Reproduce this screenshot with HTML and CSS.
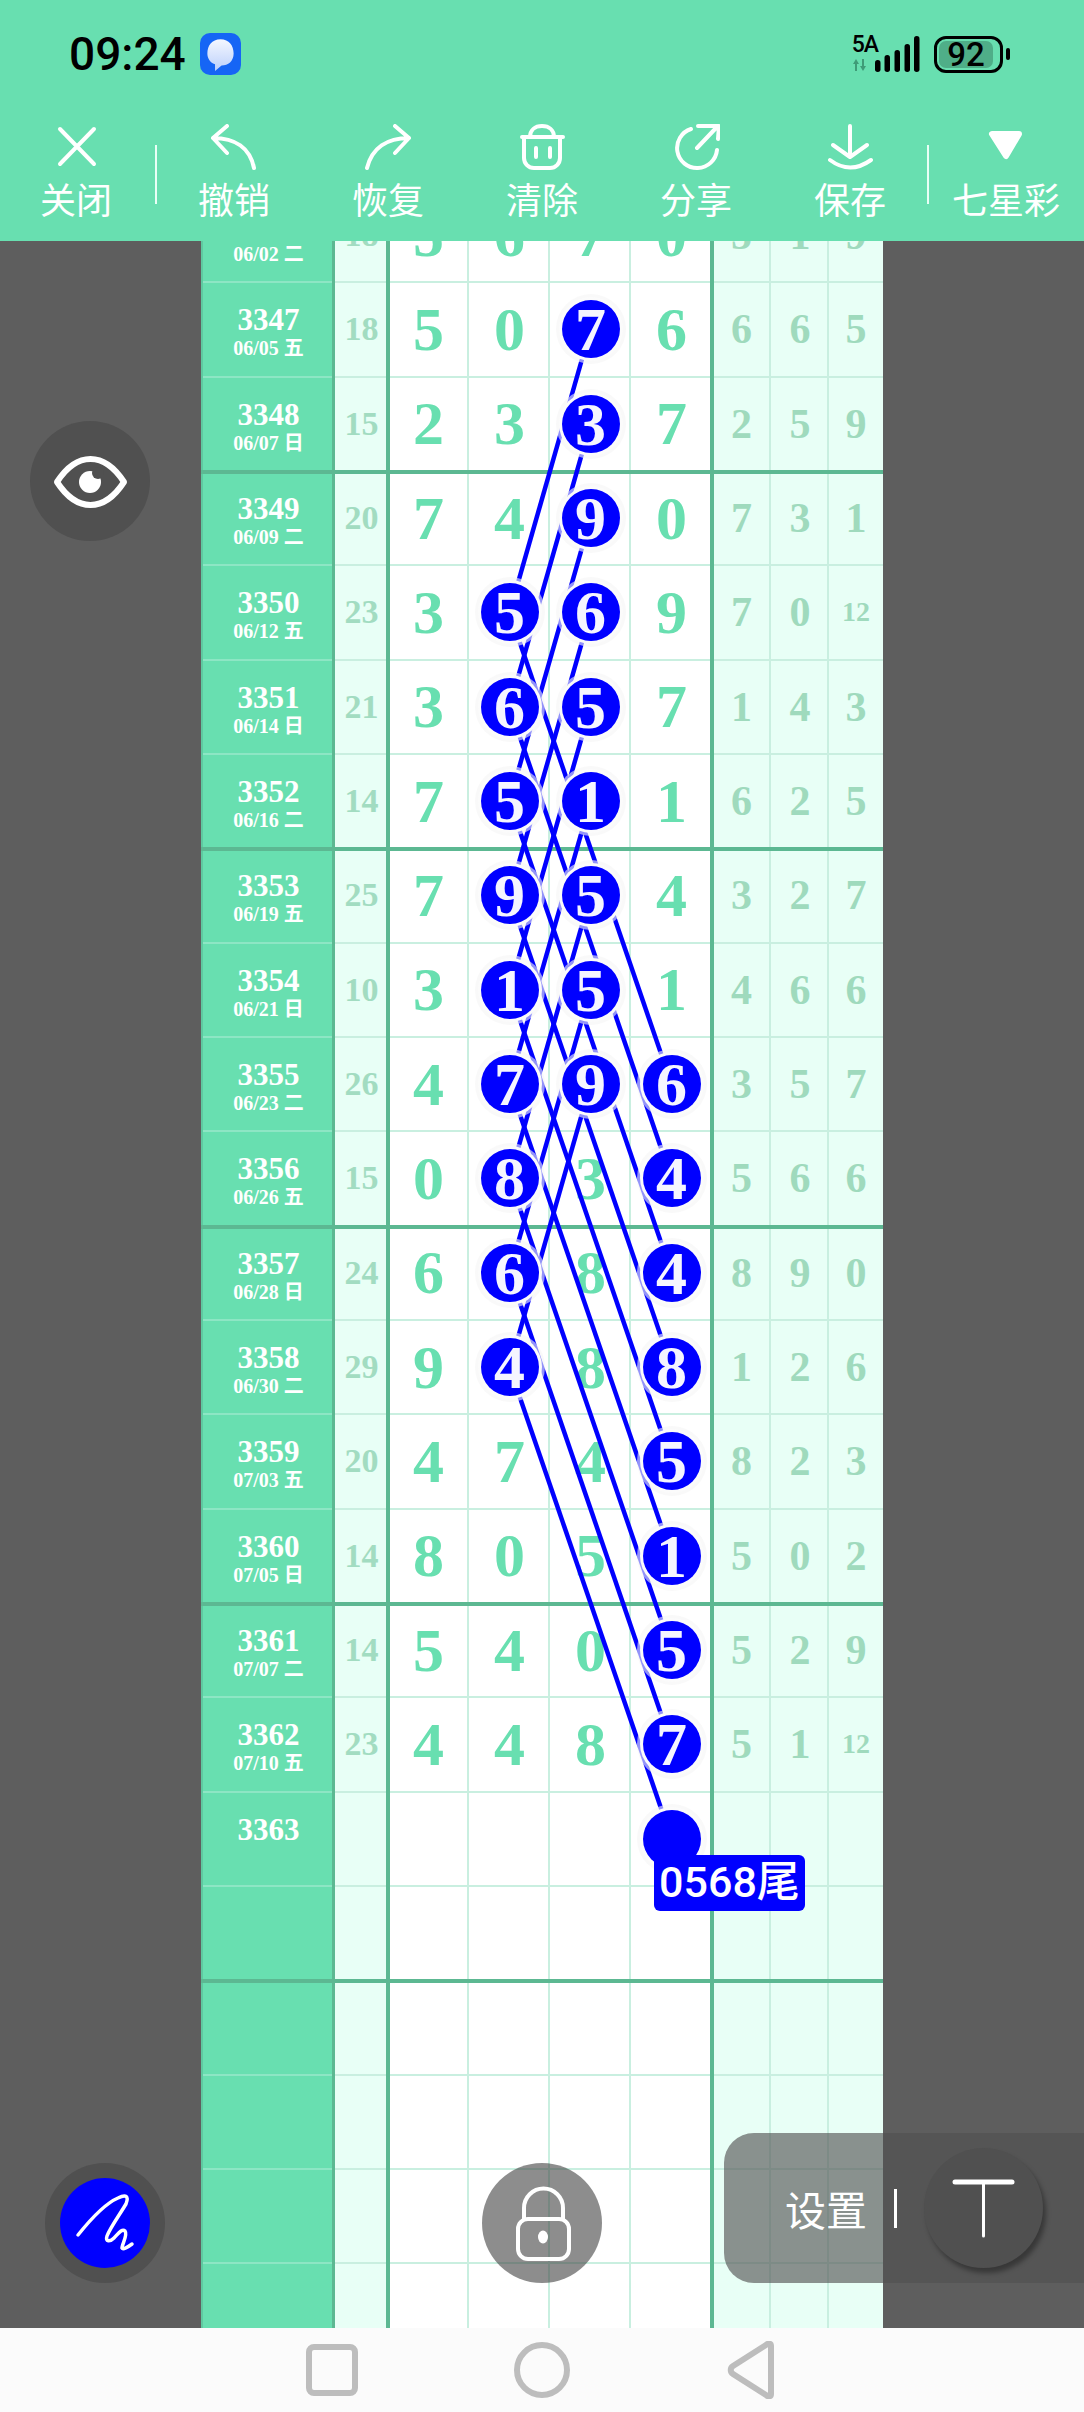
FILE: index.html
```html
<!DOCTYPE html>
<html lang="zh">
<head>
    <meta charset="UTF-8">
    <title>七星彩</title>
    <link rel="stylesheet" href="styles.css">
</head>
<body>
    <div class="screen">
        <header class="top">
            <div class="status">
                <div class="status-left">
                    <span class="clock">09:24</span>
                    <span class="msg-icon">
                        <svg width="33" height="35" viewBox="0 0 30 32"><path d="M15 2C23 2 27 8 27 15C27 22 22 26 16 26L10 31L10 25C5 23 3 19 3 15C3 8 7 2 15 2Z" fill="url(#bubble)"/><defs><linearGradient id="bubble" x1="0" y1="0" x2="0" y2="1"><stop offset="0" stop-color="#f4f7ff"/><stop offset="1" stop-color="#bcd0fb"/></linearGradient></defs></svg>
                    </span>
                </div>
                <div class="status-right">
                    <div class="net">
                        <span class="net-type">5A</span>
                        <svg width="16" height="12" viewBox="0 0 16 12"><path d="M4 0L7 5H5V12H3V5H1ZM11 12L8 7H10V0H12V7H14Z" fill="#3f9c78"/></svg>
                    </div>
                    <svg class="bars" width="45" height="36" viewBox="0 0 45 36" fill="#000">
                        <rect x="0" y="24" width="5.5" height="12" rx="2.7"/>
                        <rect x="9.5" y="19" width="5.5" height="17" rx="2.7"/>
                        <rect x="19.5" y="14" width="5.5" height="22" rx="2.7"/>
                        <rect x="29.5" y="8" width="5.5" height="28" rx="2.7"/>
                        <rect x="39" y="0" width="5.5" height="36" rx="2.7"/>
                    </svg>
                    <div class="battery"><span class="battery-level">92</span></div>
                    <span class="battery-tip"></span>
                </div>
            </div>
            <nav class="toolbar">
                <div class="tool tool-first">
                    <svg class="tool-icon" viewBox="0 0 48 48"><path d="M8 5L42 40M42 5L8 40"/></svg>
                    <span>关闭</span>
                </div>
                <span class="tool-sep sep-a"></span>
                <div class="tool">
                    <svg class="tool-icon" viewBox="0 0 48 48"><path d="M17 2L3 14L17 29M3 14C25 14 40 24 44 44"/></svg>
                    <span>撤销</span>
                </div>
                <div class="tool">
                    <svg class="tool-icon" viewBox="0 0 48 48"><path d="M31 2L45 14L31 29M45 14C23 14 8 24 3 44"/></svg>
                    <span>恢复</span>
                </div>
                <div class="tool">
                    <svg class="tool-icon" viewBox="0 0 48 48"><path d="M12 13C12 6 17 2 24 2C31 2 36 6 36 13M4 13H45M6 13V34A10 10 0 0 0 16 44H32A10 10 0 0 0 42 34V13M18 24V33M32 24V33"/></svg>
                    <span>清除</span>
                </div>
                <div class="tool">
                    <svg class="tool-icon" viewBox="0 0 48 48"><path d="M19 5A20 20 0 1 0 45 26M25 24L44 4M26 2H47L46 15"/></svg>
                    <span>分享</span>
                </div>
                <div class="tool">
                    <svg class="tool-icon" viewBox="0 0 48 48"><path d="M24 2V33M7 21L24 33L41 21M4 36Q24 51 45 36"/></svg>
                    <span>保存</span>
                </div>
                <span class="tool-sep"></span>
                <div class="tool">
                    <svg class="tool-icon tool-icon-fill" viewBox="0 0 48 48"><path d="M10 10H37L24 32Z"/></svg>
                    <span>七星彩</span>
                </div>
            </nav>
        </header>

        <main class="board">
            <div class="chart">
                <svg class="links" width="682" height="2200" stroke="#0000ff" stroke-width="4.5">
                    <line x1="389.5" y1="140.5" x2="308.5" y2="423.49"/>
                    <line x1="389.5" y1="234.83" x2="308.5" y2="517.82"/>
                    <line x1="389.5" y1="329.16" x2="308.5" y2="612.15"/>
                    <line x1="389.5" y1="423.49" x2="308.5" y2="706.48"/>
                    <line x1="389.5" y1="517.82" x2="308.5" y2="800.81"/>
                    <line x1="389.5" y1="612.15" x2="308.5" y2="895.14"/>
                    <line x1="389.5" y1="706.48" x2="308.5" y2="989.47"/>
                    <line x1="389.5" y1="800.81" x2="308.5" y2="1083.8"/>
                    <line x1="389.5" y1="895.14" x2="308.5" y2="1178.13"/>
                    <line x1="308.5" y1="423.49" x2="470.5" y2="895.14"/>
                    <line x1="308.5" y1="517.82" x2="470.5" y2="989.47"/>
                    <line x1="308.5" y1="612.15" x2="470.5" y2="1083.8"/>
                    <line x1="308.5" y1="706.48" x2="470.5" y2="1178.13"/>
                    <line x1="308.5" y1="800.81" x2="470.5" y2="1272.46"/>
                    <line x1="308.5" y1="895.14" x2="470.5" y2="1366.79"/>
                    <line x1="308.5" y1="989.47" x2="470.5" y2="1461.12"/>
                    <line x1="308.5" y1="1083.8" x2="470.5" y2="1555.45"/>
                    <line x1="308.5" y1="1178.13" x2="470.5" y2="1649.78"/>
                </svg>

                <div class="row"><div class="issue"><b></b><span>06/02 二</span></div><div class="sum">18</div><div class="num">5</div><div class="num">6</div><div class="num">7</div><div class="num">0</div><div class="tail">5</div><div class="tail">1</div><div class="tail">9</div></div>
                <div class="row"><div class="issue"><b>3347</b><span>06/05 五</span></div><div class="sum">18</div><div class="num">5</div><div class="num">0</div><div class="num"><span class="ball">7</span></div><div class="num">6</div><div class="tail">6</div><div class="tail">6</div><div class="tail">5</div></div>
                <div class="row row-end"><div class="issue"><b>3348</b><span>06/07 日</span></div><div class="sum">15</div><div class="num">2</div><div class="num">3</div><div class="num"><span class="ball">3</span></div><div class="num">7</div><div class="tail">2</div><div class="tail">5</div><div class="tail">9</div></div>

                <div class="row"><div class="issue"><b>3349</b><span>06/09 二</span></div><div class="sum">20</div><div class="num">7</div><div class="num">4</div><div class="num"><span class="ball">9</span></div><div class="num">0</div><div class="tail">7</div><div class="tail">3</div><div class="tail">1</div></div>
                <div class="row"><div class="issue"><b>3350</b><span>06/12 五</span></div><div class="sum">23</div><div class="num">3</div><div class="num"><span class="ball">5</span></div><div class="num"><span class="ball">6</span></div><div class="num">9</div><div class="tail">7</div><div class="tail">0</div><div class="tail small">12</div></div>
                <div class="row"><div class="issue"><b>3351</b><span>06/14 日</span></div><div class="sum">21</div><div class="num">3</div><div class="num"><span class="ball">6</span></div><div class="num"><span class="ball">5</span></div><div class="num">7</div><div class="tail">1</div><div class="tail">4</div><div class="tail">3</div></div>
                <div class="row row-end"><div class="issue"><b>3352</b><span>06/16 二</span></div><div class="sum">14</div><div class="num">7</div><div class="num"><span class="ball">5</span></div><div class="num"><span class="ball">1</span></div><div class="num">1</div><div class="tail">6</div><div class="tail">2</div><div class="tail">5</div></div>

                <div class="row"><div class="issue"><b>3353</b><span>06/19 五</span></div><div class="sum">25</div><div class="num">7</div><div class="num"><span class="ball">9</span></div><div class="num"><span class="ball">5</span></div><div class="num">4</div><div class="tail">3</div><div class="tail">2</div><div class="tail">7</div></div>
                <div class="row"><div class="issue"><b>3354</b><span>06/21 日</span></div><div class="sum">10</div><div class="num">3</div><div class="num"><span class="ball">1</span></div><div class="num"><span class="ball">5</span></div><div class="num">1</div><div class="tail">4</div><div class="tail">6</div><div class="tail">6</div></div>
                <div class="row"><div class="issue"><b>3355</b><span>06/23 二</span></div><div class="sum">26</div><div class="num">4</div><div class="num"><span class="ball">7</span></div><div class="num"><span class="ball">9</span></div><div class="num"><span class="ball">6</span></div><div class="tail">3</div><div class="tail">5</div><div class="tail">7</div></div>
                <div class="row row-end"><div class="issue"><b>3356</b><span>06/26 五</span></div><div class="sum">15</div><div class="num">0</div><div class="num"><span class="ball">8</span></div><div class="num">3</div><div class="num"><span class="ball">4</span></div><div class="tail">5</div><div class="tail">6</div><div class="tail">6</div></div>

                <div class="row"><div class="issue"><b>3357</b><span>06/28 日</span></div><div class="sum">24</div><div class="num">6</div><div class="num"><span class="ball">6</span></div><div class="num">8</div><div class="num"><span class="ball">4</span></div><div class="tail">8</div><div class="tail">9</div><div class="tail">0</div></div>
                <div class="row"><div class="issue"><b>3358</b><span>06/30 二</span></div><div class="sum">29</div><div class="num">9</div><div class="num"><span class="ball">4</span></div><div class="num">8</div><div class="num"><span class="ball">8</span></div><div class="tail">1</div><div class="tail">2</div><div class="tail">6</div></div>
                <div class="row"><div class="issue"><b>3359</b><span>07/03 五</span></div><div class="sum">20</div><div class="num">4</div><div class="num">7</div><div class="num">4</div><div class="num"><span class="ball">5</span></div><div class="tail">8</div><div class="tail">2</div><div class="tail">3</div></div>
                <div class="row row-end"><div class="issue"><b>3360</b><span>07/05 日</span></div><div class="sum">14</div><div class="num">8</div><div class="num">0</div><div class="num">5</div><div class="num"><span class="ball">1</span></div><div class="tail">5</div><div class="tail">0</div><div class="tail">2</div></div>

                <div class="row"><div class="issue"><b>3361</b><span>07/07 二</span></div><div class="sum">14</div><div class="num">5</div><div class="num">4</div><div class="num">0</div><div class="num"><span class="ball">5</span></div><div class="tail">5</div><div class="tail">2</div><div class="tail">9</div></div>
                <div class="row"><div class="issue"><b>3362</b><span>07/10 五</span></div><div class="sum">23</div><div class="num">4</div><div class="num">4</div><div class="num">8</div><div class="num"><span class="ball">7</span></div><div class="tail">5</div><div class="tail">1</div><div class="tail small">12</div></div>
                <div class="row"><div class="issue"><b>3363</b><span></span></div><div class="sum"></div><div class="num"></div><div class="num"></div><div class="num"></div><div class="num"><span class="ball"></span></div><div class="tail"></div><div class="tail"></div><div class="tail"></div></div>
                <div class="row row-end"><div class="issue"></div><div class="sum"></div><div class="num"></div><div class="num"></div><div class="num"></div><div class="num"></div><div class="tail"></div><div class="tail"></div><div class="tail"></div></div>

                <div class="row"><div class="issue"></div><div class="sum"></div><div class="num"></div><div class="num"></div><div class="num"></div><div class="num"></div><div class="tail"></div><div class="tail"></div><div class="tail"></div></div>
                <div class="row"><div class="issue"></div><div class="sum"></div><div class="num"></div><div class="num"></div><div class="num"></div><div class="num"></div><div class="tail"></div><div class="tail"></div><div class="tail"></div></div>
                <div class="row"><div class="issue"></div><div class="sum"></div><div class="num"></div><div class="num"></div><div class="num"></div><div class="num"></div><div class="tail"></div><div class="tail"></div><div class="tail"></div></div>
                <div class="row"><div class="issue"></div><div class="sum"></div><div class="num"></div><div class="num"></div><div class="num"></div><div class="num"></div><div class="tail"></div><div class="tail"></div><div class="tail"></div></div>

                <div class="tag">0568尾</div>
            </div>
        </main>

        <footer class="navbar">
            <svg class="nav-square" width="52" height="52" viewBox="0 0 52 52"><rect x="3" y="3" width="46" height="46" rx="5"/></svg>
            <svg class="nav-circle" width="56" height="56" viewBox="0 0 56 56"><circle cx="28" cy="28" r="25"/></svg>
            <svg class="nav-back" width="48" height="58" viewBox="0 0 48 58"><path d="M44 5C44 2 41 2 39 4L6 25C3 27 3 31 6 33L39 54C41 56 44 56 44 53Z"/></svg>
        </footer>
    </div>

    <button class="eye-btn">
        <svg width="120" height="120" viewBox="0 0 120 120">
            <path d="M27 61Q42 38 60.500 38Q79 38 94 61Q79 84 60.500 84Q42 84 27 61Z" fill="none" stroke="#fff" stroke-width="6" stroke-linejoin="round"/>
            <circle cx="60" cy="61" r="11" fill="#fff"/>
            <circle cx="68" cy="52" r="6" fill="#505050"/>
        </svg>
    </button>

    <button class="pen-btn">
        <span class="pen-ink">
            <svg width="90" height="90" viewBox="0 0 90 90"><path d="M18 57C30 42 44 26 58 20C66 16 69 18 66 26C60 36 50 50 47 58C45 64 50 64 54 60C58 56 62 50 65 53C68 57 62 66 62 70C63 72 68 69 72 66" fill="none" stroke="#fff" stroke-width="3.500" stroke-linecap="round"/></svg>
        </span>
    </button>

    <button class="lock-btn">
        <svg width="120" height="120" viewBox="0 0 120 120" fill="none" stroke="#fff" stroke-width="4">
            <path d="M42 56V45a19.500 19.500 0 0 1 39 0V56"/>
            <rect x="36" y="56" width="51" height="40" rx="10"/>
            <ellipse cx="61" cy="74" rx="5" ry="6.500" fill="#fff" stroke="none"/>
        </svg>
    </button>

    <div class="settings">
        <span class="settings-text">设置</span>
        <span class="settings-sep"></span>
        <button class="text-btn">
            <svg width="119" height="120" viewBox="0 0 119 120"><path d="M31 34H88" stroke="#fff" stroke-width="5" stroke-linecap="round"/><path d="M59.500 34V88" stroke="#fff" stroke-width="3" stroke-linecap="round"/></svg>
        </button>
    </div>
</body>
</html>
```

FILE: styles.css
```css
* {
    box-sizing: border-box;
}
body {
    margin: 0;
    width: 1084px;
    height: 2412px;
    position: relative;
    overflow: hidden;
    font-family: "Noto Sans", "Noto Sans CJK SC", sans-serif;
}
button {
    padding: 0;
    border: none;
    display: flex;
    align-items: center;
    justify-content: center;
}
.screen {
    height: 100%;
    display: flex;
    flex-direction: column;
}

/* top green bar */
.top {
    height: 241px;
    flex: none;
    background-color: #68dfb0;
    position: relative;
    z-index: 5;
}
.status {
    height: 108px;
    padding: 0 74px 0 69px;
    display: flex;
    justify-content: space-between;
    align-items: center;
}
.status-left {
    display: flex;
    align-items: center;
    gap: 14px;
}
.clock {
    font-family: Roboto, sans-serif;
    font-size: 46px;
    font-weight: 500;
    line-height: 50px;
    color: #000;
}
.msg-icon {
    width: 41px;
    height: 42px;
    border-radius: 10px;
    background-color: #1665f5;
    display: flex;
    align-items: center;
    justify-content: center;
}
.status-right {
    display: flex;
    align-items: center;
}
.net {
    display: flex;
    flex-direction: column;
    gap: 5px;
    margin-top: -1px;
}
.net-type {
    font-family: Roboto, sans-serif;
    font-size: 23px;
    font-weight: 500;
    line-height: 18px;
    letter-spacing: -1px;
    color: #000;
}
.bars {
    margin-left: -3px;
}
.battery {
    width: 69px;
    height: 37px;
    margin-left: 14px;
    padding: 2px 7px 2px 2px;
    border: 3px solid #000;
    border-radius: 12px;
}
.battery-level {
    height: 100%;
    display: block;
    border-radius: 7px;
    background-color: #4fae88;
    font-family: Roboto, sans-serif;
    font-size: 33px;
    font-weight: 500;
    line-height: 27px;
    text-align: center;
    color: #000;
}
.battery-tip {
    width: 4px;
    height: 12px;
    margin-left: 3px;
    border-radius: 2px;
    background-color: #000;
}
.toolbar {
    height: 110px;
    padding-top: 16px;
    display: flex;
    align-items: flex-start;
    color: #fff;
}
.tool {
    width: 154px;
    flex: none;
    display: flex;
    flex-direction: column;
    align-items: center;
    font-size: 36px;
    line-height: 40px;
}
.tool-first {
    width: 152px;
}
.tool-icon {
    width: 48px;
    height: 48px;
    margin-bottom: 9px;
    fill: none;
    stroke: #fff;
    stroke-width: 4;
    stroke-linecap: round;
    stroke-linejoin: round;
}
.tool-icon-fill {
    fill: #fff;
    stroke-width: 6;
}
.tool-sep {
    width: 2px;
    height: 59px;
    flex: none;
    margin-top: 21px;
    background-color: #e8fff6;
}
.sep-a {
    margin-left: 3px;
}

/* chart */
.board {
    flex: 1;
    min-height: 0;
    overflow: hidden;
    background-color: #5e5e5e;
}
.chart {
    width: 682px;
    margin: -52px auto 0;
    position: relative;
    font-family: "Liberation Serif", "Noto Sans CJK SC", serif;
    font-weight: bold;
}
.links {
    position: absolute;
    left: 0;
    top: 0;
    z-index: 2;
}
.row {
    height: 94.33px;
    display: grid;
    grid-template-columns: 134px 53px repeat(4, 81px) 59px 58px 54px;
    position: relative;
}
.row-end::after {
    content: "";
    position: absolute;
    left: 0;
    right: 0;
    bottom: -2px;
    height: 4px;
    z-index: 1;
    background-color: #5cb892;
}
.issue, .sum, .num, .tail {
    --rule: #c9efe0;
    --side: 0 0 transparent;
    box-shadow: var(--side), inset 0 -2px 0 var(--rule);
}
.sum, .num, .tail {
    padding-bottom: 2px;
    display: flex;
    align-items: center;
    justify-content: center;
}
.issue {
    --rule: #8de6c4;
    --side: inset -3px 0 0 #5cb892;
    padding: 20px 3px 0 2px;
    border-left: 2px solid #5fc9a0;
    background-color: #68dfb0;
    display: flex;
    flex-direction: column;
    align-items: center;
    color: #fff;
}
.issue b {
    font-size: 31px;
    line-height: 34px;
    min-height: 34px;
}
.issue span {
    font-size: 20px;
    line-height: 22px;
    min-height: 22px;
}
.sum {
    --side: inset -2px 0 0 #5cb892;
    background-color: #e8fff6;
    font-size: 34px;
    color: #a2dcc1;
}
.num {
    --side: inset -2px 0 0 #c9efe0;
    background-color: #fff;
    font-size: 62px;
    color: #68dfb0;
}
.row .num:nth-child(3) {
    --side: inset 2px 0 0 #5cb892, inset -2px 0 0 #c9efe0;
}
.row .num:nth-child(6) {
    --side: inset -2px 0 0 #5cb892;
}
.tail {
    --side: inset -2px 0 0 #c9efe0;
    background-color: #e8fff6;
    font-size: 42px;
    color: #9fdabd;
}
.row .tail:nth-child(7) {
    --side: inset 2px 0 0 #5cb892, inset -2px 0 0 #c9efe0;
}
.row .tail:last-child {
    --side: 0 0 transparent;
}
.small {
    font-size: 28px;
}
.ball {
    width: 58px;
    height: 58px;
    position: relative;
    z-index: 3;
    border-radius: 50%;
    background-color: #0000ff;
    box-shadow: 0 0 0 3px #fbfbfb, 0 0 0 6px rgba(245, 245, 245, 0.6);
    line-height: 58px;
    text-align: center;
    color: #f5f5ff;
}
.tag {
    position: absolute;
    left: 453px;
    top: 1666px;
    z-index: 4;
    width: 151px;
    height: 56px;
    border-radius: 6px;
    background-color: #0000ff;
    font-family: Roboto, "Noto Sans CJK SC", sans-serif;
    font-size: 43px;
    font-weight: 500;
    line-height: 54px;
    text-align: center;
    white-space: nowrap;
    color: #fff;
}

/* bottom nav */
.navbar {
    height: 84px;
    flex: none;
    padding-left: 306px;
    display: flex;
    align-items: center;
    background-color: #fbfbfb;
    position: relative;
    z-index: 5;
}
.navbar svg {
    fill: none;
    stroke: #bdbdbd;
    stroke-width: 6;
    stroke-linejoin: round;
}
.nav-circle {
    margin-left: 156px;
}
.nav-back {
    margin-left: 157px;
}

/* floating buttons */
.eye-btn, .pen-btn, .lock-btn {
    position: absolute;
    width: 120px;
    height: 120px;
    border-radius: 50%;
    z-index: 6;
}
.eye-btn {
    left: 30px;
    top: 421px;
    background-color: #505050;
}
.pen-btn {
    left: 45px;
    top: 2163px;
    background-color: #505050;
}
.pen-ink {
    width: 90px;
    height: 90px;
    border-radius: 50%;
    background-color: #0000ff;
    display: block;
}
.pen-ink svg {
    display: block;
}
.lock-btn {
    left: 482px;
    top: 2163px;
    background-color: rgba(65, 65, 65, 0.6);
}
.settings {
    position: absolute;
    left: 724px;
    right: 0;
    top: 2133px;
    height: 150px;
    z-index: 6;
    padding-left: 61px;
    display: flex;
    align-items: center;
    border-radius: 30px 0 0 30px;
    background-color: rgba(80, 80, 80, 0.63);
}
.settings-text {
    font-size: 41px;
    color: #fff;
}
.settings-sep {
    width: 3px;
    height: 39px;
    margin: 0 27px 0 27px;
    background-color: #fff;
}
.text-btn {
    width: 119px;
    height: 120px;
    border-radius: 50%;
    background-color: #505050;
    box-shadow: 3px 5px 5px rgba(0, 0, 0, 0.35);
}
```
